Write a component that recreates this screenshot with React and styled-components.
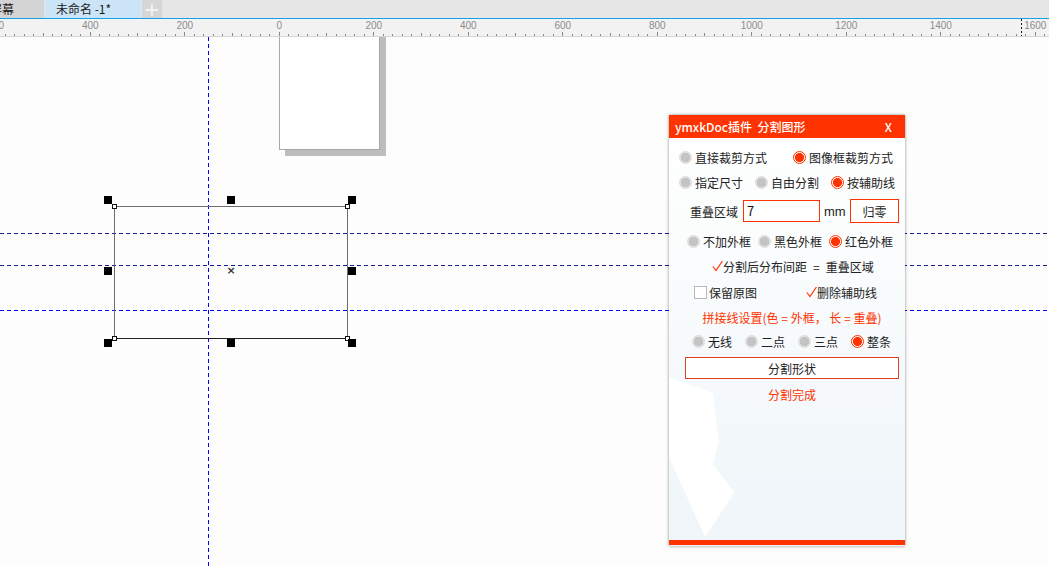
import React from 'react'
import styled, { createGlobalStyle } from 'styled-components'

const GlobalStyle = createGlobalStyle`
  html, body {
    margin: 0;
    padding: 0;
    background: #fdfdfd;
  }
  body {
    font-family: "Noto Sans CJK SC", "Noto Sans", sans-serif;
    font-size: 12px;
    color: #222;
  }
`

const RED = '#ff3300'

const Screen = styled.div`
  width: 1049px;
  height: 566px;
  overflow: hidden;
  display: flex;
  flex-direction: column;
  background: #fdfdfd;
`

const TabBar = styled.div`
  display: flex;
  height: 18px;
  background: #e6e6e6;
  border-bottom: 1px solid #14a2e6;
  flex-shrink: 0;
`

const Tab = styled.div`
  display: flex;
  align-items: center;
  width: ${(p) => p.$width}px;
  margin-right: 1px;
  padding-left: ${(p) => p.$pad}px;
  box-sizing: border-box;
  background: ${(p) => (p.$active ? '#cce4f7' : '#d4d4d4')};
  font-size: 12px;
  line-height: 18px;
  color: #1a1a1a;
  white-space: nowrap;
  overflow: hidden;
`

const AddTab = styled.div`
  display: flex;
  align-items: center;
  justify-content: center;
  width: 20px;
  background: #d6d6d6;
  color: #f4f4f4;
  font-size: 20px;
  font-family: "DejaVu Sans", sans-serif;
  line-height: 18px;
`

const RulerBar = styled.div`
  height: 17px;
  background: #f2f2f2;
  border-bottom: 1px solid #d6d6d6;
  flex-shrink: 0;
`

const Canvas = styled.div`
  position: relative;
  flex: 1;
  overflow: hidden;
  background: #fdfdfd;
`

const Page = styled.div`
  position: absolute;
  left: 279px;
  top: -10px;
  width: 99px;
  height: 121px;
  background: #fff;
  border: 1px solid #a8a8a8;
  box-shadow: 6px 6px 0 #bdbdbd;
`

const VGuide = styled.div`
  position: absolute;
  left: ${(p) => p.$x}px;
  top: 0;
  bottom: 0;
  width: 1px;
  background: repeating-linear-gradient(180deg, #0000ff 0 4px, transparent 4px 7px);
`

const HGuide = styled.div`
  position: absolute;
  top: ${(p) => p.$y}px;
  left: 0;
  right: 0;
  height: 1px;
  background: repeating-linear-gradient(90deg, ${(p) => p.$color} 0 4px, transparent 4px 7px);
`

const Shape = styled.div`
  position: absolute;
  left: 114px;
  top: 169px;
  width: 232px;
  height: 131px;
  border: 1px solid #6e6e6e;
  border-bottom-color: #222;
`

const Corner = styled.div`
  position: absolute;
  left: ${(p) => p.$x - 2}px;
  top: ${(p) => p.$y - 2}px;
  width: 3px;
  height: 3px;
  background: #fff;
  border: 1px solid #111;
`

const Handle = styled.div`
  position: absolute;
  left: ${(p) => p.$x - 4}px;
  top: ${(p) => p.$y - 4}px;
  width: 8px;
  height: 8px;
  background: #000;
`

const CenterMark = styled.div`
  position: absolute;
  left: 226px;
  top: 229px;
  width: 10px;
  height: 10px;
  color: #333;
  font-size: 11px;
  font-weight: bold;
  line-height: 10px;
  text-align: center;
  font-family: "DejaVu Sans", sans-serif;
`

const Panel = styled.div`
  position: absolute;
  left: 669px;
  top: 78px;
  width: 236px;
  height: 431px;
  display: flex;
  flex-direction: column;
  box-shadow: 0 0 3px rgba(0, 0, 0, 0.45);
  background: linear-gradient(180deg, #ffffff 0%, #f8fbfc 45%, #eff5f9 100%);
  overflow: hidden;
  &::after {
    content: '';
    position: absolute;
    left: 0;
    top: 262px;
    width: 80px;
    height: 160px;
    background: #ffffff;
    clip-path: polygon(0 0, 55% 10%, 62% 40%, 55% 55%, 82% 72%, 45% 100%, 0 50%);
  }
`

const PanelHeader = styled.div`
  display: flex;
  align-items: center;
  justify-content: space-between;
  height: 23px;
  padding: 0 13px 0 6px;
  background: ${RED};
  color: #fff;
  font-size: 12px;
  font-weight: 500;
  flex-shrink: 0;
`

const Title = styled.span`
  white-space: pre;
`

const PanelBody = styled.div`
  position: relative;
  z-index: 1;
  flex: 1;
  display: flex;
  flex-direction: column;
  padding-top: 7px;
`

const Row = styled.div`
  display: flex;
  align-items: center;
  height: ${(p) => p.$h || 24}px;
  margin-top: ${(p) => p.$mt || 0}px;
  padding-left: ${(p) => p.$pl || 0}px;
  gap: ${(p) => p.$gap || 0}px;
  white-space: pre;
`

const Option = styled.label`
  display: flex;
  align-items: center;
  gap: 3px;
  color: #222;
`

const RadioDot = styled.span`
  width: 13px;
  height: 13px;
  border-radius: 50%;
  box-sizing: border-box;
  flex-shrink: 0;
  border: 1px solid ${(p) => (p.$on ? RED : '#dadada')};
  background: ${(p) =>
    p.$on
      ? `radial-gradient(circle, ${RED} 0 4.2px, #fff 4.8px)`
      : 'radial-gradient(circle, #c4c4c4 0 4.6px, #ececec 5.2px)'};
`

const Box = styled.span`
  width: 13px;
  height: 13px;
  box-sizing: border-box;
  border: 1px solid #b8b8b8;
  background: #fff;
  margin-right: 2px;
`

const Check = styled.svg`
  width: 11px;
  height: 12px;
  flex-shrink: 0;
`

const Spacer = styled.span`
  width: ${(p) => p.$w}px;
`

const FieldLabel = styled.span`
  width: 53px;
`

const Input = styled.div`
  width: 77px;
  height: 22px;
  box-sizing: border-box;
  border: 1px solid ${RED};
  background: #fff;
  padding-left: 3px;
  line-height: 20px;
  font-size: 13px;
  color: #111;
`

const Unit = styled.span`
  margin: 0 4px;
  font-family: "Liberation Sans", sans-serif;
  font-size: 13px;
  width: 22px;
`

const SmallButton = styled.div`
  width: 49px;
  height: 24px;
  box-sizing: border-box;
  border: 1px solid ${RED};
  background: #fff;
  display: flex;
  align-items: center;
  justify-content: center;
`

const RedText = styled.div`
  color: ${RED};
  text-align: center;
  height: 24px;
  line-height: 24px;
  margin-top: ${(p) => p.$mt || 0}px;
  padding-left: ${(p) => p.$pl || 0}px;
`

const WideButton = styled.div`
  margin: 4px 6px 0 16px;
  height: 22px;
  box-sizing: border-box;
  border: 1px solid #e0401c;
  background: #fff;
  display: flex;
  align-items: center;
  justify-content: center;
`

const BottomBar = styled.div`
  position: relative;
  z-index: 1;
  height: 5px;
  margin-bottom: 1px;
  background: ${RED};
  flex-shrink: 0;
`

function Radio({ on, children }) {
  return (
    <Option>
      <RadioDot $on={on} />
      {children}
    </Option>
  )
}

function Tick() {
  return (
    <Check viewBox="0 0 11 12">
      <path d="M0.8 6.5 L4 10.5 L10.4 1" fill="none" stroke={RED} strokeWidth="1.2" />
    </Check>
  )
}

function Ruler() {
  const zero = 279.3
  const step = 9.45
  const ticks = []
  const labels = []
  for (let i = -32; i <= 82; i++) {
    const x = zero + i * step
    if (x < -5 || x > 1055) continue
    const major = i % 10 === 0
    const mid = !major && Math.abs(i % 10) === 5
    const y1 = major ? 13 : mid ? 14 : 15
    ticks.push(<line key={'t' + i} x1={x} x2={x} y1={y1} y2={17} stroke="#8a8a8a" strokeWidth="1" />)
    if (major) {
      labels.push(
        <text key={'l' + i} x={x} y={10} textAnchor="middle" fontSize="10" fill="#8c8c8c" fontFamily="Liberation Sans, sans-serif">
          {Math.abs(i * 20)}
        </text>
      )
    }
  }
  return (
    <RulerBar>
      <svg width="1049" height="17" style={{ display: 'block' }} shapeRendering="crispEdges">
        {ticks}
        {labels}
        <line x1="1021.5" x2="1021.5" y1="0" y2="17" stroke="#111" strokeDasharray="2 2" />
      </svg>
    </RulerBar>
  )
}

const handles = [
  [108, 163], [231, 163], [352, 163],
  [108, 234], [352, 234],
  [108, 306], [231, 306], [352, 306],
]

const corners = [
  [114, 169], [347, 169], [114, 301], [347, 301],
]

export default function App() {
  return (
    <Screen>
      <GlobalStyle />
      <TabBar>
        <Tab $width={44} $pad={0}>
          <span style={{ marginLeft: -10 }}>屏幕</span>
        </Tab>
        <Tab $width={96} $pad={11} $active>
          未命名 -1*
        </Tab>
        <AddTab>+</AddTab>
      </TabBar>
      <Ruler />
      <Canvas>
        <Page />
        <HGuide $y={196} $color="#1a1a9a" />
        <HGuide $y={228} $color="#1a1a9a" />
        <HGuide $y={273} $color="#0000ff" />
        <VGuide $x={208} />
        <Shape />
        {corners.map(([x, y]) => (
          <Corner key={x + '-' + y} $x={x} $y={y} />
        ))}
        {handles.map(([x, y]) => (
          <Handle key={x + '-' + y} $x={x} $y={y} />
        ))}
        <CenterMark>×</CenterMark>

        <Panel>
          <PanelHeader>
            <Title>ymxkDoc插件  分割图形</Title>
            <span>X</span>
          </PanelHeader>
          <PanelBody>
            <Row $pl={10} $gap={26}>
              <Radio>直接裁剪方式</Radio>
              <Radio on>图像框裁剪方式</Radio>
            </Row>
            <Row $pl={10} $gap={12} $mt={1}>
              <Radio>指定尺寸</Radio>
              <Radio>自由分割</Radio>
              <Radio on>按辅助线</Radio>
            </Row>
            <Row $pl={21} $h={26} $mt={4}>
              <FieldLabel>重叠区域</FieldLabel>
              <Input>7</Input>
              <Unit>mm</Unit>
              <SmallButton>归零</SmallButton>
            </Row>
            <Row $pl={18} $gap={7} $mt={5}>
              <Radio>不加外框</Radio>
              <Radio>黑色外框</Radio>
              <Radio on>红色外框</Radio>
            </Row>
            <Row $pl={43} $mt={1}>
              <Tick />
              分割后分布间距{'\u2002'}={'\u2002'}重叠区域
            </Row>
            <Row $pl={25} $mt={2}>
              <Box />
              保留原图
              <Spacer $w={49} />
              <Tick />
              删除辅助线
            </Row>
            <RedText $pl={10} $mt={2}>拼接线设置(色 = 外框， 长 = 重叠)</RedText>
            <Row $pl={23} $gap={13} $mt={-1}>
              <Radio>无线</Radio>
              <Radio>二点</Radio>
              <Radio>三点</Radio>
              <Radio on>整条</Radio>
            </Row>
            <WideButton>分割形状</WideButton>
            <RedText $mt={4} $pl={10}>分割完成</RedText>
          </PanelBody>
          <BottomBar />
        </Panel>
      </Canvas>
    </Screen>
  )
}
